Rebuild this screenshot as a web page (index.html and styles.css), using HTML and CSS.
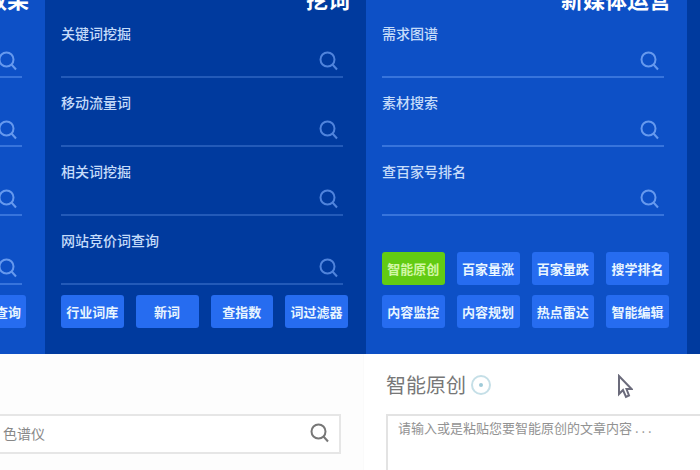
FILE: index.html
```
<!DOCTYPE html>
<html lang="zh-CN">
<head>
    <meta charset="UTF-8">
    <meta name="viewport" content="width=device-width, initial-scale=1.0">
    <title>智能原创</title>
    <link rel="stylesheet" href="styles.css">
</head>
<body>
    <svg class="sprite" aria-hidden="true">
        <symbol id="icon-search" viewBox="0 0 20 20">
            <circle cx="8.5" cy="8.5" r="7" />
            <path d="M13.5 13.5 L18 18.5" />
        </symbol>
    </svg>

    <section class="tools">
        <div class="column cut">
            <h2>效果</h2>
            <div class="field">
                <div class="input-line"><input type="text" aria-label="查询一"><svg class="icon"><use href="#icon-search" /></svg></div>
            </div>
            <div class="field">
                <div class="input-line"><input type="text" aria-label="查询二"><svg class="icon"><use href="#icon-search" /></svg></div>
            </div>
            <div class="field">
                <div class="input-line"><input type="text" aria-label="查询三"><svg class="icon"><use href="#icon-search" /></svg></div>
            </div>
            <div class="field">
                <div class="input-line"><input type="text" aria-label="查询四"><svg class="icon"><use href="#icon-search" /></svg></div>
            </div>
            <div class="buttons">
                <button type="button">查询</button>
            </div>
        </div>

        <div class="column dark">
            <h2>挖词</h2>
            <div class="field">
                <label for="keyword">关键词挖掘</label>
                <div class="input-line"><input type="text" id="keyword"><svg class="icon"><use href="#icon-search" /></svg></div>
            </div>
            <div class="field">
                <label for="mobile">移动流量词</label>
                <div class="input-line"><input type="text" id="mobile"><svg class="icon"><use href="#icon-search" /></svg></div>
            </div>
            <div class="field">
                <label for="related">相关词挖掘</label>
                <div class="input-line"><input type="text" id="related"><svg class="icon"><use href="#icon-search" /></svg></div>
            </div>
            <div class="field">
                <label for="bidding">网站竞价词查询</label>
                <div class="input-line"><input type="text" id="bidding"><svg class="icon"><use href="#icon-search" /></svg></div>
            </div>
            <div class="buttons">
                <button type="button">行业词库</button>
                <button type="button">新词</button>
                <button type="button">查指数</button>
                <button type="button">词过滤器</button>
            </div>
        </div>

        <div class="column">
            <h2>新媒体运营</h2>
            <div class="field">
                <label for="demand">需求图谱</label>
                <div class="input-line"><input type="text" id="demand"><svg class="icon"><use href="#icon-search" /></svg></div>
            </div>
            <div class="field">
                <label for="material">素材搜索</label>
                <div class="input-line"><input type="text" id="material"><svg class="icon"><use href="#icon-search" /></svg></div>
            </div>
            <div class="field">
                <label for="baijia">查百家号排名</label>
                <div class="input-line"><input type="text" id="baijia"><svg class="icon"><use href="#icon-search" /></svg></div>
            </div>
            <div class="buttons">
                <button type="button" class="active">智能原创</button>
                <button type="button">百家量涨</button>
                <button type="button">百家量跌</button>
                <button type="button">搜学排名</button>
                <button type="button">内容监控</button>
                <button type="button">内容规划</button>
                <button type="button">热点雷达</button>
                <button type="button">智能编辑</button>
            </div>
        </div>

        <div class="column dark next"></div>
    </section>

    <main>
        <div class="panel search-panel">
            <div class="search-box">
                <input type="text" value="色谱仪" aria-label="搜索">
                <svg class="icon"><use href="#icon-search" /></svg>
            </div>
        </div>
        <div class="panel writer">
            <h3>
                <label for="article">智能原创</label>
                <svg class="info" viewBox="0 0 20 20"><circle cx="10" cy="10" r="9" /><circle class="dot" cx="10" cy="10" r="2" /></svg>
            </h3>
            <textarea id="article" placeholder="请输入或是粘贴您要智能原创的文章内容 . . ."></textarea>
        </div>
    </main>

    <svg class="cursor" viewBox="0 0 16 26"><path d="M2 2 V20 L6 16 L9 23 L12 21.500 L9.500 15 H14.500 Z" /></svg>
</body>
</html>
```

FILE: styles.css
```
* { box-sizing: border-box; }
body { margin: 0; overflow: hidden; background: #fff; font-family: "Noto Sans CJK SC", "Liberation Sans", sans-serif; }
input, button, textarea { font-family: inherit; margin: 0; }
.sprite { display: none; }
.icon { width: 20px; height: 20px; flex-shrink: 0; fill: none; stroke: #6699ee; stroke-width: 2; }

/* blue tool columns */
.tools { display: grid; grid-template-columns: 45px 1fr 1fr 13px; margin-top: -17px; }
.column { display: flex; flex-direction: column; min-width: 0; padding: 0 16px 26px; background: #0d50c6; overflow: hidden; }
.column h2 { display: flex; justify-content: flex-end; margin: 0 0 10px; font-size: 22px; line-height: 30px; font-weight: 700; color: #fff; white-space: nowrap; }
.field { display: flex; flex-direction: column; justify-content: flex-end; height: 55px; margin: 0 7px 14px 0; }
.field label { font-size: 14px; line-height: 20px; font-weight: 500; color: #c5dcfa; }
.input-line { display: flex; align-items: flex-end; justify-content: flex-end; height: 35px; padding: 0 4px 5px 0; border-bottom: 2px solid #3774dc; }
.input-line input { flex: 1; width: 0; min-width: 0; height: 26px; padding: 0; border: none; outline: none; background: transparent; color: #fff; }
.buttons { display: grid; grid-template-columns: repeat(4, 1fr); gap: 10px 12px; margin: auto 2px 0 0; }
.buttons button { height: 33px; padding: 0; border: none; border-radius: 3px; background: #266cf0; color: #e8f5ff; font-size: 13px; font-weight: 700; white-space: nowrap; cursor: pointer; }
.buttons .active { background: #62cb13; color: #d2f7a5; }

.dark { background: #003a9e; }
.dark .input-line { border-color: #235ab8; }
.dark .icon { stroke: #5084dc; }
.dark .field:nth-last-child(2), .cut .field:nth-last-child(2) { margin-bottom: 10px; }
.next { padding: 0; }

.cut { padding-left: 0; }
.cut .buttons { display: flex; justify-content: flex-end; margin-right: 3px; }
.cut .buttons button { width: 62px; flex-shrink: 0; padding-left: 26px; }

/* white area */
main { display: grid; grid-template-columns: 364px 1fr; }
.panel { background: #fdfdfd; }
.search-panel { padding: 60px 22px 16px 0; border-right: 1px solid #fafafa; }
.search-box { display: flex; align-items: center; height: 40px; padding: 0 9px 0 3px; border: 2px solid #e6e6e6; border-left: none; background: #fff; }
.search-box input { flex: 1; min-width: 0; height: 20px; margin-bottom: 2px; padding: 0; border: none; outline: none; background: transparent; font-size: 14px; line-height: 20px; color: #888; }
.search-box .icon { margin-bottom: 2px; stroke: #777; }
.writer { padding: 15px 0 0 22px; background: #fff; }
.writer h3 { display: flex; align-items: center; gap: 5px; margin: 0 0 13px; font-size: 20px; line-height: 32px; font-weight: 400; color: #777; }
.info { width: 20px; height: 20px; fill: none; stroke: #c5dfe7; stroke-width: 2; }
.info .dot { fill: #9fcad8; stroke: none; }
textarea { display: block; width: 100%; height: 56px; padding: 2px 10px; border: 2px solid #e3e3e3; border-width: 2px 0 0 2px; outline: none; resize: none; background: #fff; font-size: 13px; line-height: 20px; }
textarea::placeholder { color: #929292; }

.cursor { position: absolute; left: 617px; top: 374px; width: 16px; height: 26px; fill: #fff; stroke: #6b6b7b; stroke-width: 2; }
```
